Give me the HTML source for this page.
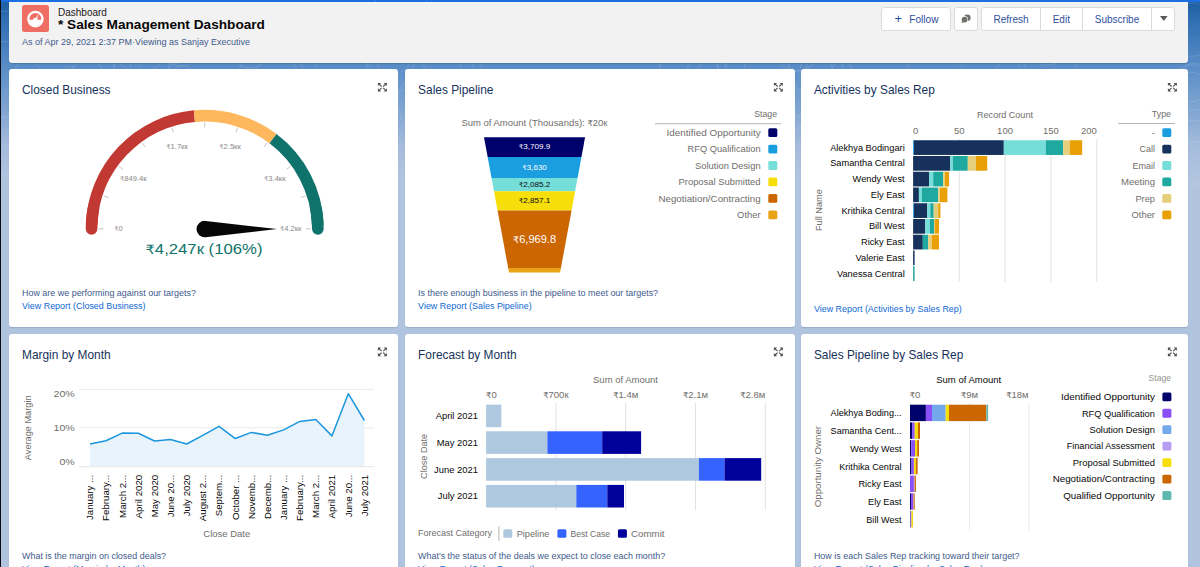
<!DOCTYPE html>
<html lang="en"><head><meta charset="utf-8"><title>Sales Management Dashboard</title>
<style>
html,body{margin:0;padding:0}
body{width:1200px;height:567px;overflow:hidden;position:relative;font-family:"Liberation Sans","DejaVu Sans",sans-serif;
background:linear-gradient(180deg,#1c5ea2 0px,#2f6fb2 20px,#578bc6 64px,#6f9bcd 90px,#84a7d3 114px,#a5bcdc 146px,#b0c4e0 176px,#b0c4e0 567px)}
.abs{position:absolute}
.topbar{left:0;top:0;width:1200px;height:2px;background:#1b6fe2}
.leftedge{left:0;top:0;width:1px;height:567px;background:#0a0d14}
.hdr{left:8.5px;top:2px;width:1179.8px;height:60.8px;background:#f3f2f2;border-radius:0 0 3px 3px;box-shadow:0 1px 1px rgba(0,0,0,.15)}
.card{background:#fff;border-radius:3px;box-shadow:0 1px 1px rgba(0,0,0,.12)}
.t{white-space:nowrap;line-height:1}
.title{font-size:11.9px;color:#16325c}
.q{font-size:8.95px;color:#3e5a8c}
.lnk{font-size:8.95px;color:#0f68d4}
.btn{background:#fff;border:1px solid #dddbda;box-sizing:border-box;height:23.6px;top:7.1px;border-radius:3px;color:#2e4f9e;font-size:10px;text-align:center;line-height:21px;white-space:nowrap}
svg text{font-family:"Liberation Sans","DejaVu Sans",sans-serif}
</style></head><body>
<div class="abs topbar"></div>

<svg class="abs" style="left:0;top:0" width="1200" height="200" viewBox="0 0 1200 200" fill="none" stroke="#fff" stroke-width="0.8" opacity="0.15"><circle cx="388.6" cy="50.6" r="24.9"/><circle cx="86.9" cy="77.5" r="17.5"/><circle cx="69.6" cy="75.5" r="9.0"/><circle cx="520.4" cy="44.9" r="10.4"/><circle cx="509.4" cy="97.9" r="11.2"/><circle cx="267.9" cy="83.9" r="32.6"/><circle cx="692.5" cy="67.8" r="33.4"/><circle cx="55.9" cy="100.1" r="15.5"/><circle cx="173.1" cy="48.2" r="16.0"/><circle cx="979.4" cy="52.7" r="23.1"/><circle cx="766.7" cy="66.1" r="22.2"/><circle cx="75.3" cy="44.2" r="13.4"/><circle cx="816.5" cy="69.9" r="16.2"/><circle cx="702.7" cy="71.7" r="15.8"/><circle cx="953.3" cy="88.9" r="14.3"/><circle cx="689.3" cy="76.8" r="30.8"/><circle cx="875.3" cy="60.2" r="33.5"/><circle cx="141.7" cy="69.3" r="27.7"/><circle cx="182.4" cy="74.2" r="9.0"/><circle cx="801.9" cy="93.5" r="22.9"/><circle cx="1050.6" cy="62.0" r="26.1"/><circle cx="713.2" cy="80.6" r="19.9"/><circle cx="1008.0" cy="106.1" r="20.3"/><circle cx="797.0" cy="44.2" r="26.2"/><circle cx="776.6" cy="109.5" r="29.4"/><circle cx="341.5" cy="67.0" r="25.4"/><circle cx="27.1" cy="72.3" r="12.4"/><circle cx="140.5" cy="44.1" r="28.0"/><circle cx="155.2" cy="57.3" r="18.2"/><circle cx="1045.7" cy="45.6" r="19.7"/><circle cx="659.3" cy="101.8" r="29.3"/><circle cx="1036.8" cy="59.5" r="18.8"/><circle cx="430.5" cy="101.9" r="32.9"/><circle cx="181.1" cy="52.3" r="14.0"/><circle cx="280.0" cy="73.9" r="23.3"/><circle cx="315.3" cy="40.3" r="18.9"/><circle cx="443.1" cy="79.6" r="32.8"/><circle cx="828.6" cy="76.1" r="24.1"/><circle cx="811.4" cy="43.8" r="31.4"/><circle cx="936.0" cy="101.2" r="28.7"/><circle cx="470.9" cy="67.9" r="10.7"/><circle cx="761.1" cy="44.4" r="9.8"/><circle cx="250.5" cy="51.4" r="16.8"/><circle cx="63.1" cy="40.0" r="11.9"/><circle cx="121.8" cy="65.5" r="8.7"/><circle cx="1049.2" cy="83.0" r="11.9"/><circle cx="1195.0" cy="162.9" r="21.3"/><circle cx="1192.0" cy="29.7" r="26.7"/><circle cx="1192.0" cy="86.9" r="14.9"/><circle cx="5.0" cy="26.4" r="15.5"/><circle cx="1195.0" cy="86.6" r="23.2"/><circle cx="401.0" cy="13.7" r="28.9"/><circle cx="401.0" cy="67.9" r="23.2"/><circle cx="2.0" cy="131.3" r="14.6"/><circle cx="798.0" cy="148.1" r="23.3"/><circle cx="1195.0" cy="92.9" r="28.0"/></svg>
<div class="abs hdr"></div>
<div class="abs" style="left:21.9px;top:5px;width:26.8px;height:26.7px;border-radius:2.5px;background:#ef6e64"></div>
<svg class="abs" style="left:21.9px;top:5px" width="27" height="27" viewBox="0 0 27 27"><circle cx="13.4" cy="14.1" r="8.3" fill="#fff"/><path d="M7.4 13.9 A6 6 0 0 1 19.4 13.9 L18.7 14.7 L8.1 14.7 Z" fill="#ef6e64"/><circle cx="13.4" cy="15.1" r="2.35" fill="#fff"/><path d="M12.7 14.7 L15.85 10.1 L16.4 10.4 L14.1 15.5 Z" fill="#fff"/></svg>
<div class="abs t" style="left:58px;top:8px;font-size:10px;color:#181818">Dashboard</div>
<div class="abs t" style="left:58px;top:17.9px;font-size:13.65px;font-weight:bold;color:#080707">* Sales Management Dashboard</div>
<div class="abs t" style="left:22px;top:38px;font-size:9px;color:#3e5a8c">As of Apr 29, 2021 2:37 PM·Viewing as Sanjay Executive</div>
<div class="abs btn" style="left:881.2px;width:69.5px"></div>
<div class="abs t" style="left:894.5px;top:12.2px;font-size:13px;color:#2e4f9e">+</div>
<div class="abs t" style="left:909.3px;top:14.5px;font-size:10.1px;color:#2e4f9e">Follow</div>
<div class="abs btn" style="left:954.3px;width:23.9px"></div>
<svg class="abs" style="left:960px;top:13px" width="12" height="12" viewBox="0 0 12 12"><circle cx="7.3" cy="4.8" r="3.3" fill="#706e6b"/><circle cx="4.6" cy="6.6" r="3.5" fill="#fff"/><circle cx="4.6" cy="6.6" r="2.9" fill="#706e6b"/><path d="M2 8 L1.4 10 L3.6 9.2 Z" fill="#706e6b"/></svg>
<div class="abs btn" style="left:981.3px;width:193.4px;border-radius:3px"></div>
<div class="abs" style="left:1040px;top:8px;width:1px;height:22px;background:#dddbda"></div>
<div class="abs" style="left:1082px;top:8px;width:1px;height:22px;background:#dddbda"></div>
<div class="abs" style="left:1151px;top:8px;width:1px;height:22px;background:#dddbda"></div>
<div class="abs t" style="left:1011px;top:15px;width:80px;margin-left:-40px;text-align:center;font-size:10px;color:#2e4f9e">Refresh</div>
<div class="abs t" style="left:1061.3px;top:15px;width:80px;margin-left:-40px;text-align:center;font-size:10px;color:#2e4f9e">Edit</div>
<div class="abs t" style="left:1117px;top:15px;width:80px;margin-left:-40px;text-align:center;font-size:10px;color:#2e4f9e">Subscribe</div>
<svg class="abs" style="left:1159.7px;top:16px" width="8" height="6" viewBox="0 0 8 6"><path d="M0 0 L7.6 0 L3.8 5 Z" fill="#5c5a58"/></svg>
<div class="abs card" style="left:8.5px;top:69.3px;width:389.8px;height:258.1px"></div>
<div class="abs t title" style="left:22px;top:85.3px">Closed Business</div>
<div class="abs t q" style="left:22px;top:288.6px">How are we performing against our targets?</div>
<div class="abs t lnk" style="left:22px;top:301.6px">View Report (Closed Business)</div>
<div class="abs card" style="left:405.2px;top:69.3px;width:389.8px;height:258.1px"></div>
<div class="abs t title" style="left:418.1px;top:85.3px">Sales Pipeline</div>
<div class="abs t q" style="left:418.1px;top:288.6px">Is there enough business in the pipeline to meet our targets?</div>
<div class="abs t lnk" style="left:418.1px;top:301.6px">View Report (Sales Pipeline)</div>
<div class="abs card" style="left:801.2px;top:69.3px;width:386.9px;height:258.1px"></div>
<div class="abs t title" style="left:813.9px;top:85.3px">Activities by Sales Rep</div>
<div class="abs t lnk" style="left:813.9px;top:305.3px">View Report (Activities by Sales Rep)</div>
<div class="abs card" style="left:8.5px;top:334px;width:389.8px;height:240px"></div>
<div class="abs t title" style="left:22px;top:350px">Margin by Month</div>
<div class="abs t q" style="left:22px;top:552.1px">What is the margin on closed deals?</div>
<div class="abs t lnk" style="left:22px;top:565.1px">View Report (Margin by Month)</div>
<div class="abs card" style="left:405.2px;top:334px;width:389.8px;height:240px"></div>
<div class="abs t title" style="left:418.1px;top:350px">Forecast by Month</div>
<div class="abs t q" style="left:418.1px;top:552.1px">What's the status of the deals we expect to close each month?</div>
<div class="abs t lnk" style="left:418.1px;top:565.1px">View Report (Sales Forecast)</div>
<div class="abs card" style="left:801.2px;top:334px;width:386.9px;height:240px"></div>
<div class="abs t title" style="left:813.9px;top:350px">Sales Pipeline by Sales Rep</div>
<div class="abs t q" style="left:813.9px;top:552.1px">How is each Sales Rep tracking toward their target?</div>
<div class="abs t lnk" style="left:813.9px;top:565.1px">View Report (Sales Pipeline by Sales Rep)</div>
<svg class="abs" style="left:0;top:0" width="1200" height="567" viewBox="0 0 1200 567">
<g transform="translate(377.9,82.9)" fill="#514f4d" stroke="#514f4d" stroke-width="1.1" stroke-linecap="butt"><path d="M0 0 L3.2 0 L0 3.2 Z" stroke="none"/><path d="M1.2 1.2 L3.7 3.6" fill="none"/><path d="M9 0 L5.8 0 L9 3.2 Z" stroke="none"/><path d="M7.8 1.2 L5.3 3.6" fill="none"/><path d="M0 8.6 L3.2 8.6 L0 5.4 Z" stroke="none"/><path d="M1.2 7.4 L3.7 5" fill="none"/><path d="M9 8.6 L5.8 8.6 L9 5.4 Z" stroke="none"/><path d="M7.8 7.4 L5.3 5" fill="none"/></g>
<g transform="translate(773.9,82.9)" fill="#514f4d" stroke="#514f4d" stroke-width="1.1" stroke-linecap="butt"><path d="M0 0 L3.2 0 L0 3.2 Z" stroke="none"/><path d="M1.2 1.2 L3.7 3.6" fill="none"/><path d="M9 0 L5.8 0 L9 3.2 Z" stroke="none"/><path d="M7.8 1.2 L5.3 3.6" fill="none"/><path d="M0 8.6 L3.2 8.6 L0 5.4 Z" stroke="none"/><path d="M1.2 7.4 L3.7 5" fill="none"/><path d="M9 8.6 L5.8 8.6 L9 5.4 Z" stroke="none"/><path d="M7.8 7.4 L5.3 5" fill="none"/></g>
<g transform="translate(1167.9,82.9)" fill="#514f4d" stroke="#514f4d" stroke-width="1.1" stroke-linecap="butt"><path d="M0 0 L3.2 0 L0 3.2 Z" stroke="none"/><path d="M1.2 1.2 L3.7 3.6" fill="none"/><path d="M9 0 L5.8 0 L9 3.2 Z" stroke="none"/><path d="M7.8 1.2 L5.3 3.6" fill="none"/><path d="M0 8.6 L3.2 8.6 L0 5.4 Z" stroke="none"/><path d="M1.2 7.4 L3.7 5" fill="none"/><path d="M9 8.6 L5.8 8.6 L9 5.4 Z" stroke="none"/><path d="M7.8 7.4 L5.3 5" fill="none"/></g>
<g transform="translate(377.9,347.6)" fill="#514f4d" stroke="#514f4d" stroke-width="1.1" stroke-linecap="butt"><path d="M0 0 L3.2 0 L0 3.2 Z" stroke="none"/><path d="M1.2 1.2 L3.7 3.6" fill="none"/><path d="M9 0 L5.8 0 L9 3.2 Z" stroke="none"/><path d="M7.8 1.2 L5.3 3.6" fill="none"/><path d="M0 8.6 L3.2 8.6 L0 5.4 Z" stroke="none"/><path d="M1.2 7.4 L3.7 5" fill="none"/><path d="M9 8.6 L5.8 8.6 L9 5.4 Z" stroke="none"/><path d="M7.8 7.4 L5.3 5" fill="none"/></g>
<g transform="translate(773.9,347.6)" fill="#514f4d" stroke="#514f4d" stroke-width="1.1" stroke-linecap="butt"><path d="M0 0 L3.2 0 L0 3.2 Z" stroke="none"/><path d="M1.2 1.2 L3.7 3.6" fill="none"/><path d="M9 0 L5.8 0 L9 3.2 Z" stroke="none"/><path d="M7.8 1.2 L5.3 3.6" fill="none"/><path d="M0 8.6 L3.2 8.6 L0 5.4 Z" stroke="none"/><path d="M1.2 7.4 L3.7 5" fill="none"/><path d="M9 8.6 L5.8 8.6 L9 5.4 Z" stroke="none"/><path d="M7.8 7.4 L5.3 5" fill="none"/></g>
<g transform="translate(1167.9,347.6)" fill="#514f4d" stroke="#514f4d" stroke-width="1.1" stroke-linecap="butt"><path d="M0 0 L3.2 0 L0 3.2 Z" stroke="none"/><path d="M1.2 1.2 L3.7 3.6" fill="none"/><path d="M9 0 L5.8 0 L9 3.2 Z" stroke="none"/><path d="M7.8 1.2 L5.3 3.6" fill="none"/><path d="M0 8.6 L3.2 8.6 L0 5.4 Z" stroke="none"/><path d="M1.2 7.4 L3.7 5" fill="none"/><path d="M9 8.6 L5.8 8.6 L9 5.4 Z" stroke="none"/><path d="M7.8 7.4 L5.3 5" fill="none"/></g>
<path d="M91.55 228.80 A113.15 113.15 0 0 1 93.27 209.15" fill="none" stroke="#c23934" stroke-width="11.7" stroke-linecap="round"/>
<path d="M316.13 209.15 A113.15 113.15 0 0 1 317.85 228.80" fill="none" stroke="#0f736b" stroke-width="11.7" stroke-linecap="round"/>
<path d="M91.62 224.85 A113.15 113.15 0 0 1 194.41 116.12" fill="none" stroke="#c23934" stroke-width="11.7" stroke-linecap="butt"/>
<path d="M194.41 116.12 A113.15 113.15 0 0 1 273.03 138.62" fill="none" stroke="#ffb75d" stroke-width="11.7" stroke-linecap="butt"/>
<path d="M273.03 138.62 A113.15 113.15 0 0 1 317.78 224.85" fill="none" stroke="#0f736b" stroke-width="11.7" stroke-linecap="butt"/>
<path d="M98.50 228.80 L103.50 228.80" stroke="#c9c7c5" stroke-width="1"/>
<path d="M103.70 195.98 L108.45 197.53" stroke="#c9c7c5" stroke-width="1"/>
<path d="M118.78 166.38 L122.83 169.32" stroke="#c9c7c5" stroke-width="1"/>
<path d="M142.28 142.88 L145.22 146.93" stroke="#c9c7c5" stroke-width="1"/>
<path d="M171.88 127.80 L173.43 132.55" stroke="#c9c7c5" stroke-width="1"/>
<path d="M204.70 122.60 L204.70 127.60" stroke="#c9c7c5" stroke-width="1"/>
<path d="M237.52 127.80 L235.97 132.55" stroke="#c9c7c5" stroke-width="1"/>
<path d="M267.12 142.88 L264.18 146.93" stroke="#c9c7c5" stroke-width="1"/>
<path d="M290.62 166.38 L286.57 169.32" stroke="#c9c7c5" stroke-width="1"/>
<path d="M305.70 195.98 L300.95 197.53" stroke="#c9c7c5" stroke-width="1"/>
<path d="M310.90 228.80 L305.90 228.80" stroke="#c9c7c5" stroke-width="1"/>
<text x="114.3" y="230.6" font-size="7.6" fill="#8a8886" text-anchor="start"><tspan font-size="0.88em">₹</tspan>0</text>
<text x="120" y="180.5" font-size="7.6" fill="#8a8886" text-anchor="start"><tspan font-size="0.88em">₹</tspan>849.4к</text>
<text x="166.3" y="149" font-size="7.6" fill="#8a8886" text-anchor="start"><tspan font-size="0.88em">₹</tspan>1.7кк</text>
<text x="219.3" y="149" font-size="7.6" fill="#8a8886" text-anchor="start"><tspan font-size="0.88em">₹</tspan>2.5кк</text>
<text x="285.5" y="180.5" font-size="7.6" fill="#8a8886" text-anchor="end"><tspan font-size="0.88em">₹</tspan>3.4кк</text>
<text x="301.4" y="230.6" font-size="7.6" fill="#8a8886" text-anchor="end"><tspan font-size="0.88em">₹</tspan>4.2кк</text>
<path d="M277 229.1 L205.6 220.9 A8.2 8.2 0 1 0 205.6 237.2 Z" fill="#080707"/>
<text x="204" y="254.3" font-size="14.6" fill="#0f736b" text-anchor="middle" textLength="117" lengthAdjust="spacingAndGlyphs"><tspan font-size="0.88em">₹</tspan>4,247к (106%)</text>
<path d="M484.00 137.20 L585.10 137.20 L581.44 157.00 L487.66 157.00 Z" fill="#00006b"/>
<path d="M487.66 157.00 L581.44 157.00 L577.58 177.90 L491.52 177.90 Z" fill="#1b9ee0"/>
<path d="M491.52 177.90 L577.58 177.90 L575.12 191.20 L493.98 191.20 Z" fill="#76ded9"/>
<path d="M493.98 191.20 L575.12 191.20 L571.56 210.50 L497.54 210.50 Z" fill="#f5de0a"/>
<path d="M497.54 210.50 L571.56 210.50 L560.93 268.00 L508.17 268.00 Z" fill="#cc6600"/>
<path d="M508.17 268.00 L560.93 268.00 L560.10 272.50 L509.00 272.50 Z" fill="#e8a317"/>
<text x="534.55" y="149.2" font-size="7.6" fill="#fff" text-anchor="middle" textLength="31.5" lengthAdjust="spacingAndGlyphs"><tspan font-size="0.88em">₹</tspan>3,709.9</text>
<text x="534.55" y="169.6" font-size="7.6" fill="#fff" text-anchor="middle" textLength="24.5" lengthAdjust="spacingAndGlyphs"><tspan font-size="0.88em">₹</tspan>3,630</text>
<text x="534.55" y="186.8" font-size="7.6" fill="#080707" text-anchor="middle" textLength="31.5" lengthAdjust="spacingAndGlyphs"><tspan font-size="0.88em">₹</tspan>2,085.2</text>
<text x="534.55" y="203.2" font-size="7.6" fill="#080707" text-anchor="middle" textLength="31.5" lengthAdjust="spacingAndGlyphs"><tspan font-size="0.88em">₹</tspan>2,857.1</text>
<text x="534.55" y="242.8" font-size="10.6" fill="#fff" text-anchor="middle" textLength="43" lengthAdjust="spacingAndGlyphs"><tspan font-size="0.88em">₹</tspan>6,969.8</text>
<text x="534.4" y="126" font-size="9.4" fill="#706e6b" text-anchor="middle" textLength="146" lengthAdjust="spacingAndGlyphs">Sum of Amount (Thousands): <tspan font-size="0.88em">₹</tspan>20к</text>
<text x="777" y="116.8" font-size="9.5" fill="#706e6b" text-anchor="end" textLength="22.7" lengthAdjust="spacingAndGlyphs">Stage</text>
<rect x="655" y="123.2" width="126" height="1" fill="#b5b3b1"/>
<text x="760.6" y="135.90" font-size="9.5" fill="#706e6b" text-anchor="end" textLength="94" lengthAdjust="spacingAndGlyphs">Identified Opportunity</text>
<rect x="768.3" y="128.20" width="9" height="8.8" rx="1.5" fill="#00006b"/>
<text x="760.6" y="152.35" font-size="9.5" fill="#706e6b" text-anchor="end" textLength="73" lengthAdjust="spacingAndGlyphs">RFQ Qualification</text>
<rect x="768.3" y="144.65" width="9" height="8.8" rx="1.5" fill="#1b9ee0"/>
<text x="760.6" y="168.80" font-size="9.5" fill="#706e6b" text-anchor="end" textLength="65.5" lengthAdjust="spacingAndGlyphs">Solution Design</text>
<rect x="768.3" y="161.10" width="9" height="8.8" rx="1.5" fill="#76ded9"/>
<text x="760.6" y="185.25" font-size="9.5" fill="#706e6b" text-anchor="end" textLength="82.1" lengthAdjust="spacingAndGlyphs">Proposal Submitted</text>
<rect x="768.3" y="177.55" width="9" height="8.8" rx="1.5" fill="#f5de0a"/>
<text x="760.6" y="201.70" font-size="9.5" fill="#706e6b" text-anchor="end" textLength="102.2" lengthAdjust="spacingAndGlyphs">Negotiation/Contracting</text>
<rect x="768.3" y="194.00" width="9" height="8.8" rx="1.5" fill="#cc6600"/>
<text x="760.6" y="218.15" font-size="9.5" fill="#706e6b" text-anchor="end" textLength="23.5" lengthAdjust="spacingAndGlyphs">Other</text>
<rect x="768.3" y="210.45" width="9" height="8.8" rx="1.5" fill="#e8a317"/>
<rect x="958.67" y="139" width="1" height="143" fill="#e4e2e0"/>
<rect x="1004.54" y="139" width="1" height="143" fill="#e4e2e0"/>
<rect x="1050.41" y="139" width="1" height="143" fill="#e4e2e0"/>
<rect x="1096.28" y="139" width="1" height="143" fill="#e4e2e0"/>
<text x="1005" y="118" font-size="9.5" fill="#706e6b" text-anchor="middle" textLength="56" lengthAdjust="spacingAndGlyphs">Record Count</text>
<text x="913.00" y="134" font-size="9.5" fill="#706e6b" text-anchor="start">0</text>
<text x="959.17" y="134" font-size="9.5" fill="#706e6b" text-anchor="middle">50</text>
<text x="1005.04" y="134" font-size="9.5" fill="#706e6b" text-anchor="middle">100</text>
<text x="1050.91" y="134" font-size="9.5" fill="#706e6b" text-anchor="middle">150</text>
<text x="1096.78" y="134" font-size="9.5" fill="#706e6b" text-anchor="end">200</text>
<rect x="913.10" y="140.25" width="0.90" height="14.7" fill="#1b9ee0"/>
<rect x="914.00" y="140.25" width="89.80" height="14.7" fill="#16325c"/>
<rect x="1003.80" y="140.25" width="42.00" height="14.7" fill="#76ded9"/>
<rect x="1045.80" y="140.25" width="17.40" height="14.7" fill="#1fa8a0"/>
<rect x="1063.20" y="140.25" width="6.80" height="14.7" fill="#e6cf7a"/>
<rect x="1070.00" y="140.25" width="12.20" height="14.7" fill="#e8a006"/>
<text x="904.7" y="150.70" font-size="9.25" fill="#080707" text-anchor="end">Alekhya Bodingari</text>
<rect x="913.10" y="156.00" width="37.20" height="14.7" fill="#16325c"/>
<rect x="950.30" y="156.00" width="2.50" height="14.7" fill="#76ded9"/>
<rect x="952.80" y="156.00" width="15.00" height="14.7" fill="#1fa8a0"/>
<rect x="967.80" y="156.00" width="8.10" height="14.7" fill="#e6cf7a"/>
<rect x="975.90" y="156.00" width="11.30" height="14.7" fill="#e8a006"/>
<text x="904.7" y="166.45" font-size="9.25" fill="#080707" text-anchor="end">Samantha Central</text>
<rect x="913.10" y="171.75" width="15.90" height="14.7" fill="#16325c"/>
<rect x="929.00" y="171.75" width="4.20" height="14.7" fill="#76ded9"/>
<rect x="933.20" y="171.75" width="10.00" height="14.7" fill="#1fa8a0"/>
<rect x="943.20" y="171.75" width="1.70" height="14.7" fill="#e6cf7a"/>
<rect x="944.90" y="171.75" width="4.20" height="14.7" fill="#e8a006"/>
<text x="904.7" y="182.20" font-size="9.25" fill="#080707" text-anchor="end">Wendy West</text>
<rect x="913.10" y="187.50" width="5.80" height="14.7" fill="#16325c"/>
<rect x="918.90" y="187.50" width="2.90" height="14.7" fill="#76ded9"/>
<rect x="921.80" y="187.50" width="16.40" height="14.7" fill="#1fa8a0"/>
<rect x="938.20" y="187.50" width="1.70" height="14.7" fill="#e6cf7a"/>
<rect x="939.90" y="187.50" width="7.50" height="14.7" fill="#e8a006"/>
<text x="904.7" y="197.95" font-size="9.25" fill="#080707" text-anchor="end">Ely East</text>
<rect x="913.10" y="203.25" width="0.80" height="14.7" fill="#1b9ee0"/>
<rect x="913.90" y="203.25" width="13.40" height="14.7" fill="#16325c"/>
<rect x="927.30" y="203.25" width="3.00" height="14.7" fill="#76ded9"/>
<rect x="930.30" y="203.25" width="3.40" height="14.7" fill="#1fa8a0"/>
<rect x="933.70" y="203.25" width="4.50" height="14.7" fill="#e6cf7a"/>
<rect x="938.20" y="203.25" width="2.20" height="14.7" fill="#e8a006"/>
<text x="904.7" y="213.70" font-size="9.25" fill="#080707" text-anchor="end">Krithika Central</text>
<rect x="913.10" y="219.00" width="12.00" height="14.7" fill="#16325c"/>
<rect x="925.10" y="219.00" width="4.70" height="14.7" fill="#76ded9"/>
<rect x="929.80" y="219.00" width="4.20" height="14.7" fill="#1fa8a0"/>
<rect x="934.00" y="219.00" width="0.80" height="14.7" fill="#e6cf7a"/>
<rect x="934.80" y="219.00" width="4.20" height="14.7" fill="#e8a006"/>
<text x="904.7" y="229.45" font-size="9.25" fill="#080707" text-anchor="end">Bill West</text>
<rect x="913.10" y="234.75" width="9.70" height="14.7" fill="#16325c"/>
<rect x="922.80" y="234.75" width="5.30" height="14.7" fill="#1fa8a0"/>
<rect x="928.10" y="234.75" width="3.70" height="14.7" fill="#e6cf7a"/>
<rect x="931.80" y="234.75" width="7.20" height="14.7" fill="#e8a006"/>
<text x="904.7" y="245.20" font-size="9.25" fill="#080707" text-anchor="end">Ricky East</text>
<rect x="913.10" y="250.50" width="1.50" height="14.7" fill="#16325c"/>
<text x="904.7" y="260.95" font-size="9.25" fill="#080707" text-anchor="end">Valerie East</text>
<rect x="913.10" y="266.25" width="1.50" height="14.7" fill="#1fa8a0"/>
<text x="904.7" y="276.70" font-size="9.25" fill="#080707" text-anchor="end">Vanessa Central</text>
<text transform="translate(821.9,210.1) rotate(-90)" font-size="9.2" fill="#706e6b" text-anchor="middle">Full Name</text>
<text x="1171" y="117.3" font-size="9.5" fill="#706e6b" text-anchor="end" textLength="19.2" lengthAdjust="spacingAndGlyphs">Type</text>
<rect x="1118" y="123" width="57" height="1" fill="#b5b3b1"/>
<text x="1155" y="135.90" font-size="9.5" fill="#706e6b" text-anchor="end">-</text>
<rect x="1162.3" y="128.20" width="9" height="8.8" rx="1.5" fill="#1b9ee0"/>
<text x="1155" y="152.35" font-size="9.5" fill="#706e6b" text-anchor="end" textLength="15.4" lengthAdjust="spacingAndGlyphs">Call</text>
<rect x="1162.3" y="144.65" width="9" height="8.8" rx="1.5" fill="#16325c"/>
<text x="1155" y="168.80" font-size="9.5" fill="#706e6b" text-anchor="end" textLength="22.6" lengthAdjust="spacingAndGlyphs">Email</text>
<rect x="1162.3" y="161.10" width="9" height="8.8" rx="1.5" fill="#76ded9"/>
<text x="1155" y="185.25" font-size="9.5" fill="#706e6b" text-anchor="end" textLength="34" lengthAdjust="spacingAndGlyphs">Meeting</text>
<rect x="1162.3" y="177.55" width="9" height="8.8" rx="1.5" fill="#1fa8a0"/>
<text x="1155" y="201.70" font-size="9.5" fill="#706e6b" text-anchor="end" textLength="19.6" lengthAdjust="spacingAndGlyphs">Prep</text>
<rect x="1162.3" y="194.00" width="9" height="8.8" rx="1.5" fill="#e6cf7a"/>
<text x="1155" y="218.15" font-size="9.5" fill="#706e6b" text-anchor="end" textLength="23.5" lengthAdjust="spacingAndGlyphs">Other</text>
<rect x="1162.3" y="210.45" width="9" height="8.8" rx="1.5" fill="#e8a006"/>
<rect x="79.2" y="389.10" width="295.2" height="1" fill="#ecebea"/>
<rect x="79.2" y="427.30" width="295.2" height="1" fill="#ecebea"/>
<rect x="79.2" y="466.2" width="295.2" height="1" fill="#e6e4e2"/>
<path d="M90.05 444.00 L106.00 440.80 L122.20 433.10 L138.30 433.30 L154.50 441.00 L170.50 439.50 L186.70 444.00 L202.80 435.30 L219.00 426.40 L235.35 438.55 L251.30 432.40 L267.40 435.30 L283.60 429.90 L299.90 421.40 L315.80 419.50 L331.90 435.90 L348.30 393.70 L364.40 420.50 L364.40 466.1 L90.05 466.1 Z" fill="#e9f3fb"/>
<path d="M90.05 444.00 L106.00 440.80 L122.20 433.10 L138.30 433.30 L154.50 441.00 L170.50 439.50 L186.70 444.00 L202.80 435.30 L219.00 426.40 L235.35 438.55 L251.30 432.40 L267.40 435.30 L283.60 429.90 L299.90 421.40 L315.80 419.50 L331.90 435.90 L348.30 393.70 L364.40 420.50" fill="none" stroke="#1b96de" stroke-width="1.5" stroke-linejoin="round"/>
<text x="74.8" y="396.8" font-size="9.2" fill="#706e6b" text-anchor="end" textLength="21.3" lengthAdjust="spacingAndGlyphs">20%</text>
<text x="74.8" y="431.1" font-size="9.2" fill="#706e6b" text-anchor="end" textLength="21.3" lengthAdjust="spacingAndGlyphs">10%</text>
<text x="74.8" y="464.8" font-size="9.2" fill="#706e6b" text-anchor="end" textLength="15.4" lengthAdjust="spacingAndGlyphs">0%</text>
<text transform="translate(31,427.8) rotate(-90)" font-size="9.2" fill="#706e6b" text-anchor="middle">Average Margin</text>
<text transform="translate(93.35,474.8) rotate(-90)" font-size="9.7" fill="#080707" text-anchor="end">January ...</text>
<text transform="translate(109.30,474.8) rotate(-90)" font-size="9.7" fill="#080707" text-anchor="end">February...</text>
<text transform="translate(125.50,474.8) rotate(-90)" font-size="9.7" fill="#080707" text-anchor="end">March 2...</text>
<text transform="translate(141.60,474.8) rotate(-90)" font-size="9.7" fill="#080707" text-anchor="end">April 2020</text>
<text transform="translate(157.80,474.8) rotate(-90)" font-size="9.7" fill="#080707" text-anchor="end">May 2020</text>
<text transform="translate(173.80,474.8) rotate(-90)" font-size="9.7" fill="#080707" text-anchor="end">June 20...</text>
<text transform="translate(190.00,474.8) rotate(-90)" font-size="9.7" fill="#080707" text-anchor="end">July 2020</text>
<text transform="translate(206.10,474.8) rotate(-90)" font-size="9.7" fill="#080707" text-anchor="end">August 2...</text>
<text transform="translate(222.30,474.8) rotate(-90)" font-size="9.7" fill="#080707" text-anchor="end">Septem...</text>
<text transform="translate(238.65,474.8) rotate(-90)" font-size="9.7" fill="#080707" text-anchor="end">October ...</text>
<text transform="translate(254.60,474.8) rotate(-90)" font-size="9.7" fill="#080707" text-anchor="end">Novemb...</text>
<text transform="translate(270.70,474.8) rotate(-90)" font-size="9.7" fill="#080707" text-anchor="end">Decemb...</text>
<text transform="translate(286.90,474.8) rotate(-90)" font-size="9.7" fill="#080707" text-anchor="end">January ...</text>
<text transform="translate(303.20,474.8) rotate(-90)" font-size="9.7" fill="#080707" text-anchor="end">February...</text>
<text transform="translate(319.10,474.8) rotate(-90)" font-size="9.7" fill="#080707" text-anchor="end">March 2...</text>
<text transform="translate(335.20,474.8) rotate(-90)" font-size="9.7" fill="#080707" text-anchor="end">April 2021</text>
<text transform="translate(351.60,474.8) rotate(-90)" font-size="9.7" fill="#080707" text-anchor="end">June 20...</text>
<text transform="translate(367.70,474.8) rotate(-90)" font-size="9.7" fill="#080707" text-anchor="end">July 2021</text>
<text x="226.8" y="537.2" font-size="9.5" fill="#706e6b" text-anchor="middle">Close Date</text>
<rect x="555.40" y="403" width="1" height="107" fill="#e4e2e0"/>
<rect x="625.20" y="403" width="1" height="107" fill="#e4e2e0"/>
<rect x="695.00" y="403" width="1" height="107" fill="#e4e2e0"/>
<rect x="764.80" y="403" width="1" height="107" fill="#e4e2e0"/>
<text x="625.5" y="382.6" font-size="9.5" fill="#706e6b" text-anchor="middle">Sum of Amount</text>
<text x="486.10" y="398" font-size="9.5" fill="#706e6b" text-anchor="start"><tspan font-size="0.88em">₹</tspan>0</text>
<text x="555.90" y="398" font-size="9.5" fill="#706e6b" text-anchor="middle"><tspan font-size="0.88em">₹</tspan>700к</text>
<text x="625.70" y="398" font-size="9.5" fill="#706e6b" text-anchor="middle"><tspan font-size="0.88em">₹</tspan>1.4м</text>
<text x="695.50" y="398" font-size="9.5" fill="#706e6b" text-anchor="middle"><tspan font-size="0.88em">₹</tspan>2.1м</text>
<text x="765.30" y="398" font-size="9.5" fill="#706e6b" text-anchor="end"><tspan font-size="0.88em">₹</tspan>2.8м</text>
<rect x="486.10" y="404.60" width="15.20" height="22.6" fill="#aec8df"/>
<text x="477.9" y="419.10" font-size="9.4" fill="#080707" text-anchor="end">April 2021</text>
<rect x="486.10" y="431.30" width="61.30" height="22.6" fill="#aec8df"/>
<rect x="547.40" y="431.30" width="54.80" height="22.6" fill="#3563ff"/>
<rect x="602.20" y="431.30" width="38.90" height="22.6" fill="#00009b"/>
<text x="477.9" y="445.80" font-size="9.4" fill="#080707" text-anchor="end">May 2021</text>
<rect x="486.10" y="458.10" width="212.80" height="22.6" fill="#aec8df"/>
<rect x="698.90" y="458.10" width="25.60" height="22.6" fill="#3563ff"/>
<rect x="724.50" y="458.10" width="36.70" height="22.6" fill="#00009b"/>
<text x="477.9" y="472.60" font-size="9.4" fill="#080707" text-anchor="end">June 2021</text>
<rect x="486.10" y="484.90" width="90.20" height="22.6" fill="#aec8df"/>
<rect x="576.30" y="484.90" width="31.00" height="22.6" fill="#3563ff"/>
<rect x="607.30" y="484.90" width="16.70" height="22.6" fill="#00009b"/>
<text x="477.9" y="499.40" font-size="9.4" fill="#080707" text-anchor="end">July 2021</text>
<text transform="translate(426.6,456.4) rotate(-90)" font-size="9.1" fill="#706e6b" text-anchor="middle">Close Date</text>
<text x="417.9" y="535.7" font-size="9.5" fill="#706e6b" textLength="74.1" lengthAdjust="spacingAndGlyphs">Forecast Category</text>
<rect x="498.4" y="526.4" width="1" height="14.6" fill="#b5b3b1"/>
<rect x="503.3" y="529.2" width="9" height="8.6" rx="1.5" fill="#aec8df"/>
<text x="516.7" y="536.6" font-size="9.5" fill="#706e6b" textLength="32.7" lengthAdjust="spacingAndGlyphs">Pipeline</text>
<rect x="557.4" y="529.2" width="9" height="8.6" rx="1.5" fill="#3563ff"/>
<text x="570.5" y="536.6" font-size="9.5" fill="#706e6b" textLength="39.5" lengthAdjust="spacingAndGlyphs">Best Case</text>
<rect x="617.9" y="529.2" width="9" height="8.6" rx="1.5" fill="#00009b"/>
<text x="631" y="536.6" font-size="9.5" fill="#706e6b" textLength="33.5" lengthAdjust="spacingAndGlyphs">Commit</text>
<rect x="969.10" y="403" width="1" height="127.5" fill="#e7eaf0"/>
<rect x="1028.40" y="403" width="1" height="127.5" fill="#e7eaf0"/>
<text x="968.7" y="382.6" font-size="9.5" fill="#080707" text-anchor="middle">Sum of Amount</text>
<text x="909.8" y="398" font-size="9.5" fill="#706e6b" text-anchor="start"><tspan font-size="0.88em">₹</tspan>0</text>
<text x="969.6" y="398" font-size="9.5" fill="#706e6b" text-anchor="middle"><tspan font-size="0.88em">₹</tspan>9м</text>
<text x="1028.6" y="398" font-size="9.5" fill="#706e6b" text-anchor="end"><tspan font-size="0.88em">₹</tspan>18м</text>
<rect x="910.00" y="404.70" width="15.90" height="16.4" fill="#00006b"/>
<rect x="925.90" y="404.70" width="6.10" height="16.4" fill="#8a4ff7"/>
<rect x="932.00" y="404.70" width="13.70" height="16.4" fill="#73a8ea"/>
<rect x="945.70" y="404.70" width="3.30" height="16.4" fill="#f5de0a"/>
<rect x="949.00" y="404.70" width="37.40" height="16.4" fill="#cc6600"/>
<rect x="986.40" y="404.70" width="1.70" height="16.4" fill="#5fb8ad"/>
<text x="901.6" y="416.40" font-size="9.15" fill="#080707" text-anchor="end">Alekhya Boding...</text>
<rect x="910.00" y="422.42" width="2.20" height="16.4" fill="#00006b"/>
<rect x="912.20" y="422.42" width="2.50" height="16.4" fill="#8a4ff7"/>
<rect x="914.70" y="422.42" width="3.30" height="16.4" fill="#f5de0a"/>
<rect x="918.00" y="422.42" width="2.00" height="16.4" fill="#cc6600"/>
<text x="901.6" y="434.12" font-size="9.15" fill="#080707" text-anchor="end">Samantha Cent...</text>
<rect x="910.00" y="440.14" width="1.20" height="16.4" fill="#00006b"/>
<rect x="911.20" y="440.14" width="3.80" height="16.4" fill="#8a4ff7"/>
<rect x="915.00" y="440.14" width="2.20" height="16.4" fill="#f5de0a"/>
<rect x="917.20" y="440.14" width="1.80" height="16.4" fill="#cc6600"/>
<text x="901.6" y="451.84" font-size="9.15" fill="#080707" text-anchor="end">Wendy West</text>
<rect x="910.00" y="457.86" width="1.50" height="16.4" fill="#00006b"/>
<rect x="911.50" y="457.86" width="2.40" height="16.4" fill="#8a4ff7"/>
<rect x="913.90" y="457.86" width="2.00" height="16.4" fill="#f5de0a"/>
<rect x="915.90" y="457.86" width="1.70" height="16.4" fill="#cc6600"/>
<text x="901.6" y="469.56" font-size="9.15" fill="#080707" text-anchor="end">Krithika Central</text>
<rect x="910.00" y="475.58" width="3.90" height="16.4" fill="#8a4ff7"/>
<rect x="913.90" y="475.58" width="0.70" height="16.4" fill="#b89cf2"/>
<rect x="914.60" y="475.58" width="1.30" height="16.4" fill="#cc6600"/>
<text x="901.6" y="487.28" font-size="9.15" fill="#080707" text-anchor="end">Ricky East</text>
<rect x="910.00" y="493.30" width="1.00" height="16.4" fill="#00006b"/>
<rect x="911.00" y="493.30" width="2.00" height="16.4" fill="#8a4ff7"/>
<rect x="913.00" y="493.30" width="0.60" height="16.4" fill="#b89cf2"/>
<rect x="913.60" y="493.30" width="1.10" height="16.4" fill="#cc6600"/>
<text x="901.6" y="505.00" font-size="9.15" fill="#080707" text-anchor="end">Ely East</text>
<rect x="910.00" y="511.02" width="0.50" height="16.4" fill="#00006b"/>
<rect x="910.50" y="511.02" width="0.90" height="16.4" fill="#8a4ff7"/>
<rect x="911.40" y="511.02" width="1.60" height="16.4" fill="#f5de0a"/>
<text x="901.6" y="522.72" font-size="9.15" fill="#080707" text-anchor="end">Bill West</text>
<text transform="translate(820.9,466.6) rotate(-90)" font-size="9.7" fill="#706e6b" text-anchor="middle">Opportunity Owner</text>
<text x="1171" y="381.4" font-size="9.5" fill="#969492" text-anchor="end" textLength="22.5" lengthAdjust="spacingAndGlyphs">Stage</text>
<text x="1154.9" y="400.10" font-size="9.5" fill="#080707" text-anchor="end" textLength="94" lengthAdjust="spacingAndGlyphs">Identified Opportunity</text>
<rect x="1162.4" y="392.40" width="9" height="8.8" rx="1.5" fill="#00006b"/>
<text x="1154.9" y="416.55" font-size="9.5" fill="#080707" text-anchor="end" textLength="73" lengthAdjust="spacingAndGlyphs">RFQ Qualification</text>
<rect x="1162.4" y="408.85" width="9" height="8.8" rx="1.5" fill="#8a4ff7"/>
<text x="1154.9" y="433.00" font-size="9.5" fill="#080707" text-anchor="end" textLength="65.5" lengthAdjust="spacingAndGlyphs">Solution Design</text>
<rect x="1162.4" y="425.30" width="9" height="8.8" rx="1.5" fill="#73a8ea"/>
<text x="1154.9" y="449.45" font-size="9.5" fill="#080707" text-anchor="end" textLength="88.2" lengthAdjust="spacingAndGlyphs">Financial Assessment</text>
<rect x="1162.4" y="441.75" width="9" height="8.8" rx="1.5" fill="#b89cf2"/>
<text x="1154.9" y="465.90" font-size="9.5" fill="#080707" text-anchor="end" textLength="82.1" lengthAdjust="spacingAndGlyphs">Proposal Submitted</text>
<rect x="1162.4" y="458.20" width="9" height="8.8" rx="1.5" fill="#f5de0a"/>
<text x="1154.9" y="482.35" font-size="9.5" fill="#080707" text-anchor="end" textLength="102.2" lengthAdjust="spacingAndGlyphs">Negotiation/Contracting</text>
<rect x="1162.4" y="474.65" width="9" height="8.8" rx="1.5" fill="#cc6600"/>
<text x="1154.9" y="498.80" font-size="9.5" fill="#080707" text-anchor="end" textLength="91.7" lengthAdjust="spacingAndGlyphs">Qualified Opportunity</text>
<rect x="1162.4" y="491.10" width="9" height="8.8" rx="1.5" fill="#5fb8ad"/>
</svg>
<div class="abs leftedge"></div>
</body></html>
